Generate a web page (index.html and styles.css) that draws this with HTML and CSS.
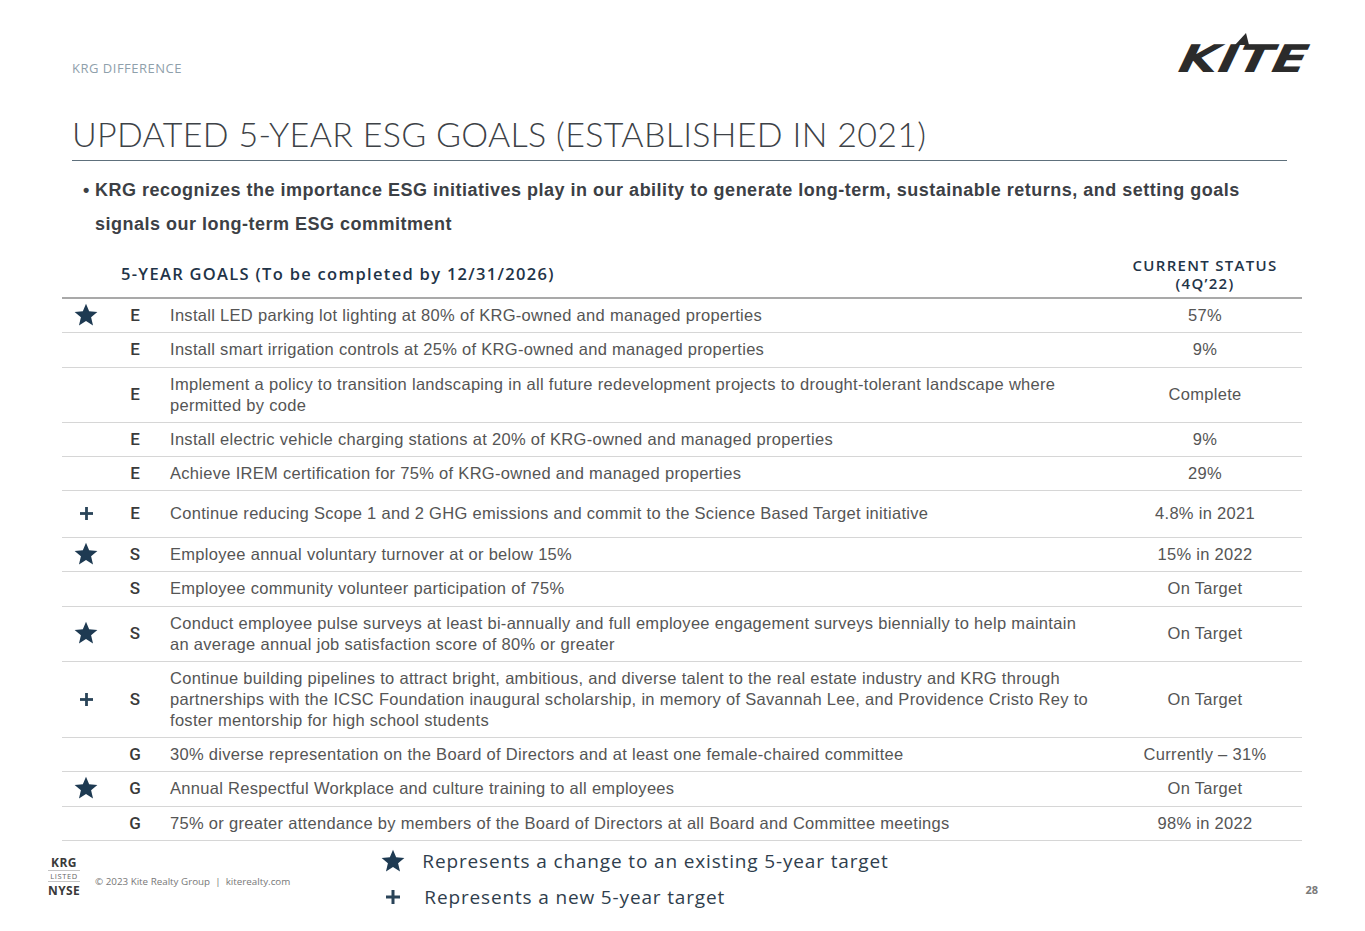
FILE: index.html
```html
<!DOCTYPE html>
<html lang="en">
<head>
<meta charset="utf-8">
<title>Updated 5-Year ESG Goals</title>
<link rel="stylesheet" href="styles.css">
</head>
<body>
<div class="slide">
  <header class="top">
    <div class="section">KRG DIFFERENCE</div>
    <div class="logo">
      <svg width="140" height="44" viewBox="0 0 140 44" aria-label="Kite">
        <g transform="skewX(-12) translate(10,0)">
          <text x="0" y="42" class="logo-text" textLength="128" lengthAdjust="spacingAndGlyphs">KITE</text>
        </g>
        <polygon points="59,15 70,3 73,15" fill="#2b2b2b"/>
      </svg>
    </div>
  </header>

  <h1 class="title">UPDATED 5-YEAR ESG GOALS (ESTABLISHED IN 2021)</h1>

  <ul class="bullets">
    <li><span class="dot">•</span><span>KRG recognizes the importance ESG initiatives play in our ability to generate long-term, sustainable returns, and setting goals signals our long-term ESG commitment</span></li>
  </ul>

  <table class="goals">
    <colgroup>
      <col class="c-icon"><col class="c-letter"><col class="c-text"><col class="c-status">
    </colgroup>
    <thead>
      <tr>
        <th></th>
        <th colspan="2" class="h-goals">5-YEAR GOALS (To be completed by 12/31/2026)</th>
        <th class="h-status">CURRENT STATUS<br>(4Q’22)</th>
      </tr>
    </thead>
    <tbody>
      <tr>
        <td class="icon"><svg class="star" viewBox="0 0 24 24"><polygon points="12,1.5 14.9,8.6 22.5,9.2 16.7,14.1 18.5,21.6 12,17.6 5.5,21.6 7.3,14.1 1.5,9.2 9.1,8.6"/></svg></td>
        <td class="letter">E</td>
        <td class="goal">Install LED parking lot lighting at 80% of KRG-owned and managed properties</td>
        <td class="status">57%</td>
      </tr>
      <tr>
        <td class="icon"></td>
        <td class="letter">E</td>
        <td class="goal">Install smart irrigation controls at 25% of KRG-owned and managed properties</td>
        <td class="status">9%</td>
      </tr>
      <tr>
        <td class="icon"></td>
        <td class="letter">E</td>
        <td class="goal">Implement a policy to transition landscaping in all future redevelopment projects to drought-tolerant landscape where<br>permitted by code</td>
        <td class="status">Complete</td>
      </tr>
      <tr>
        <td class="icon"></td>
        <td class="letter">E</td>
        <td class="goal">Install electric vehicle charging stations at 20% of KRG-owned and managed properties</td>
        <td class="status">9%</td>
      </tr>
      <tr>
        <td class="icon"></td>
        <td class="letter">E</td>
        <td class="goal">Achieve IREM certification for 75% of KRG-owned and managed properties</td>
        <td class="status">29%</td>
      </tr>
      <tr class="tall">
        <td class="icon"><svg class="plus" viewBox="0 0 14 14"><rect x="5.5" y="0" width="3" height="14"/><rect x="0" y="5.5" width="14" height="3"/></svg></td>
        <td class="letter">E</td>
        <td class="goal">Continue reducing Scope 1 and 2 GHG emissions and commit to the Science Based Target initiative</td>
        <td class="status">4.8% in 2021</td>
      </tr>
      <tr>
        <td class="icon"><svg class="star" viewBox="0 0 24 24"><polygon points="12,1.5 14.9,8.6 22.5,9.2 16.7,14.1 18.5,21.6 12,17.6 5.5,21.6 7.3,14.1 1.5,9.2 9.1,8.6"/></svg></td>
        <td class="letter">S</td>
        <td class="goal">Employee annual voluntary turnover at or below 15%</td>
        <td class="status">15% in 2022</td>
      </tr>
      <tr>
        <td class="icon"></td>
        <td class="letter">S</td>
        <td class="goal">Employee community volunteer participation of 75%</td>
        <td class="status">On Target</td>
      </tr>
      <tr>
        <td class="icon"><svg class="star" viewBox="0 0 24 24"><polygon points="12,1.5 14.9,8.6 22.5,9.2 16.7,14.1 18.5,21.6 12,17.6 5.5,21.6 7.3,14.1 1.5,9.2 9.1,8.6"/></svg></td>
        <td class="letter">S</td>
        <td class="goal">Conduct employee pulse surveys at least bi-annually and full employee engagement surveys biennially to help maintain<br>an average annual job satisfaction score of 80% or greater</td>
        <td class="status">On Target</td>
      </tr>
      <tr>
        <td class="icon"><svg class="plus" viewBox="0 0 14 14"><rect x="5.5" y="0" width="3" height="14"/><rect x="0" y="5.5" width="14" height="3"/></svg></td>
        <td class="letter">S</td>
        <td class="goal">Continue building pipelines to attract bright, ambitious, and diverse talent to the real estate industry and KRG through<br>partnerships with the ICSC Foundation inaugural scholarship, in memory of Savannah Lee, and Providence Cristo Rey to<br>foster mentorship for high school students</td>
        <td class="status">On Target</td>
      </tr>
      <tr>
        <td class="icon"></td>
        <td class="letter">G</td>
        <td class="goal">30% diverse representation on the Board of Directors and at least one female-chaired committee</td>
        <td class="status">Currently – 31%</td>
      </tr>
      <tr>
        <td class="icon"><svg class="star" viewBox="0 0 24 24"><polygon points="12,1.5 14.9,8.6 22.5,9.2 16.7,14.1 18.5,21.6 12,17.6 5.5,21.6 7.3,14.1 1.5,9.2 9.1,8.6"/></svg></td>
        <td class="letter">G</td>
        <td class="goal">Annual Respectful Workplace and culture training to all employees</td>
        <td class="status">On Target</td>
      </tr>
      <tr>
        <td class="icon"></td>
        <td class="letter">G</td>
        <td class="goal">75% or greater attendance by members of the Board of Directors at all Board and Committee meetings</td>
        <td class="status">98% in 2022</td>
      </tr>
    </tbody>
  </table>

  <footer class="foot">
    <div class="nyse">
      <div class="nyse-krg">KRG</div>
      <div class="nyse-listed">LISTED</div>
      <div class="nyse-name">NYSE</div>
    </div>
    <div class="copy">© 2023 Kite Realty Group &nbsp;|&nbsp; kiterealty.com</div>
    <div class="legend">
      <span class="legend-icon"><svg class="star lg" viewBox="0 0 24 24"><polygon points="12,1.5 14.9,8.6 22.5,9.2 16.7,14.1 18.5,21.6 12,17.6 5.5,21.6 7.3,14.1 1.5,9.2 9.1,8.6"/></svg></span>
      <span class="legend-text">Represents a change to an existing 5-year target</span>
      <span class="legend-icon"><svg class="plus lg" viewBox="0 0 14 14"><rect x="5.5" y="0" width="3" height="14"/><rect x="0" y="5.5" width="14" height="3"/></svg></span>
      <span class="legend-text second">Represents a new 5-year target</span>
    </div>
    <div class="pagenum">28</div>
  </footer>
</div>
</body>
</html>
```

FILE: styles.css
```css
* { box-sizing: border-box; }
html, body { margin: 0; padding: 0; background: #fff; }
body {
  width: 1365px;
  height: 931px;
  overflow: hidden;
  font-family: "Liberation Sans", Arial, sans-serif;
  color: #555;
}

.top {
  display: flex;
  justify-content: space-between;
  height: 90px;
  padding: 0 49px 0 72px;
}
.section {
  padding-top: 61px;
  font-family: "Open Sans", sans-serif;
  font-size: 13px;
  line-height: 14px;
  letter-spacing: 0.5px;
  color: #8fa0ab;
}
.logo { padding-top: 30px; }
.logo svg { display: block; overflow: visible; }
.logo-text {
  font-family: "DejaVu Sans", sans-serif;
  font-weight: 700;
  font-style: italic;
  font-size: 38px;
  fill: #2b2b2b;
}

.title {
  margin: 24px 78px 0 72px;
  padding-bottom: 6px;
  border-bottom: 1px solid #5e707c;
  font-family: Lato, sans-serif;
  font-weight: 300;
  font-size: 34px;
  line-height: 40px;
  letter-spacing: 0.3px;
  color: #3d4247;
}

.bullets {
  list-style: none;
  margin: 12px 0 0 83px;
  padding: 0;
  width: 1180px;
}
.bullets li {
  display: flex;
  font-family: "Liberation Sans", Arial, sans-serif;
  font-weight: 700;
  font-size: 18px;
  line-height: 34px;
  letter-spacing: 0.5px;
  color: #3c4045;
}
.bullets .dot { width: 12px; flex: none; letter-spacing: 0; }

.goals {
  margin: 11px 0 0 62px;
  width: 1240px;
  border-collapse: collapse;
  table-layout: fixed;
}
.c-icon { width: 48px; }
.c-letter { width: 50px; }
.c-status { width: 194px; }

.goals th {
  padding: 4px 0 5px;
  line-height: 18px;
  font-family: "Open Sans", sans-serif;
  font-weight: 600;
  color: #1f3448;
  border-bottom: 2px solid #a9a9a9;
  vertical-align: middle;
}
.goals th.h-goals {
  text-align: left;
  padding-left: 11px;
  font-size: 16.5px;
  letter-spacing: 1.3px;
}
.goals th.h-status {
  text-align: center;
  font-size: 15px;
  letter-spacing: 1.3px;
}

.goals td {
  padding-top: 6px;
  padding-bottom: 6.3px;
  line-height: 21px;
  font-size: 16.5px;
  letter-spacing: 0.3px;
  border-bottom: 1px solid #d6d6d6;
  vertical-align: middle;
}
.goals tr.tall td { padding-top: 12px; padding-bottom: 12.5px; }
.goals td.icon { text-align: center; }
.goals td.letter {
  text-align: center;
  font-family: Roboto, sans-serif;
  font-weight: 500;
  font-size: 17px;
  letter-spacing: 0;
  color: #3a3a3a;
}
.goals td.goal { padding-left: 10px; }
.goals td.status { text-align: center; }

.star { width: 26px; height: 26px; display: block; margin: -3px auto -2px; fill: #1e3a52; }
.plus { width: 13px; height: 13px; display: block; margin: 0 auto; fill: #2a4459; }

.foot {
  display: flex;
  align-items: flex-start;
  padding: 0 47px 0 48px;
}
.nyse {
  width: 32px;
  margin-top: 15px;
  text-align: center;
  color: #3a3a3a;
}
.nyse-krg, .nyse-name {
  font-family: "Open Sans", sans-serif;
  font-weight: 700;
  font-size: 12px;
  line-height: 13px;
  letter-spacing: 0.4px;
}
.nyse-listed {
  font-family: "Open Sans", sans-serif;
  font-size: 7.5px;
  line-height: 10px;
  letter-spacing: 0.6px;
  border-top: 1px solid #c4c4c4;
  border-bottom: 1px solid #c4c4c4;
  margin: 1px 0 2px;
  color: #666;
}
.copy {
  flex: none;
  margin: 35px 0 0 15px;
  font-family: "Open Sans", sans-serif;
  font-size: 9.8px;
  line-height: 12px;
  color: #777;
}
.legend {
  display: grid;
  grid-template-columns: 30px auto;
  column-gap: 14px;
  margin-left: 88px;
  margin-top: 2px;
}
.legend-icon {
  height: 36px;
  display: flex;
  align-items: center;
  justify-content: center;
}
.legend-text {
  font-family: "Open Sans", sans-serif;
  font-size: 19px;
  line-height: 36px;
  letter-spacing: 0.85px;
  color: #2f3e4d;
}
.legend-text.second { padding-left: 2px; }
.star.lg { width: 26px; height: 26px; margin: 0; }
.plus.lg { width: 14px; height: 14px; }
.pagenum {
  margin: 42px 0 0 auto;
  font-family: "Open Sans", sans-serif;
  font-weight: 700;
  font-size: 11px;
  line-height: 14px;
  color: #7a7a7a;
}
```
